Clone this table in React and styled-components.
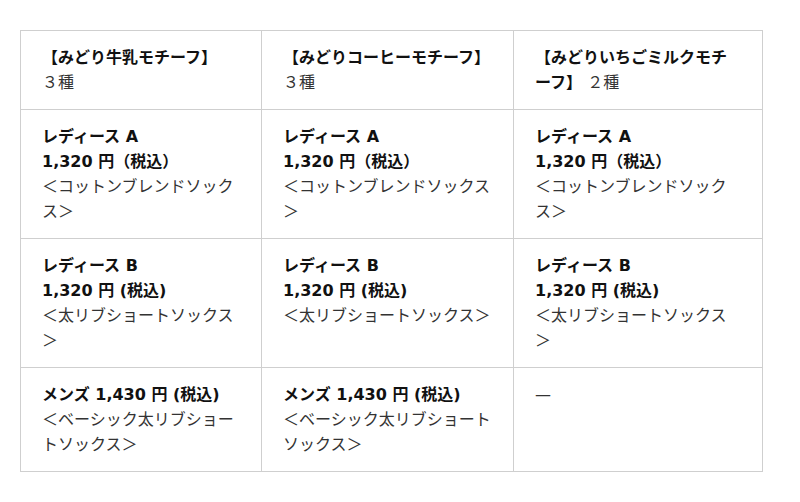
import styled, { createGlobalStyle } from "styled-components";

const GlobalStyle = createGlobalStyle`
  body {
    margin: 0;
    background: #fff;
    font-family: "DejaVu Sans", "Noto Sans CJK JP", sans-serif;
  }
`;

const Page = styled.div`
  padding: 30px 20px;
`;

const Table = styled.table`
  border-collapse: collapse;
  table-layout: fixed;
  width: 742px;
  font-size: 16px;
  line-height: 25px;
  color: #333;
`;

const Cell = styled.td`
  border: 1px solid #cfcfcf;
  padding: 14px 21px;
  vertical-align: top;
`;

const Strong = styled.b`
  color: #111;
  font-weight: bold;
`;

const columns = [241, 252, 249];

const rows = [
  [
    <><Strong>【みどり牛乳モチーフ】</Strong><br />３種</>,
    <><Strong>【みどりコーヒーモチーフ】</Strong><br />３種</>,
    <><Strong>【みどりいちごミルクモチーフ】</Strong> ２種</>,
  ],
  [0, 1, 2].map(() => (
    <>
      <Strong>レディース A</Strong><br />
      <Strong>1,320 円（税込）</Strong><br />
      ＜コットンブレンドソックス＞
    </>
  )),
  [0, 1, 2].map(() => (
    <>
      <Strong>レディース B</Strong><br />
      <Strong>1,320 円 (税込)</Strong><br />
      ＜太リブショートソックス＞
    </>
  )),
  [
    <><Strong>メンズ 1,430 円 (税込)</Strong><br />＜ベーシック太リブショートソックス＞</>,
    <><Strong>メンズ 1,430 円 (税込)</Strong><br />＜ベーシック太リブショートソックス＞</>,
    <>—</>,
  ],
];

export default function App() {
  return (
    <Page>
      <GlobalStyle />
      <Table>
        <colgroup>
          {columns.map((w, i) => (
            <col key={i} style={{ width: w }} />
          ))}
        </colgroup>
        <tbody>
          {rows.map((row, r) => (
            <tr key={r}>
              {row.map((content, c) => (
                <Cell key={c}>{content}</Cell>
              ))}
            </tr>
          ))}
        </tbody>
      </Table>
    </Page>
  );
}
